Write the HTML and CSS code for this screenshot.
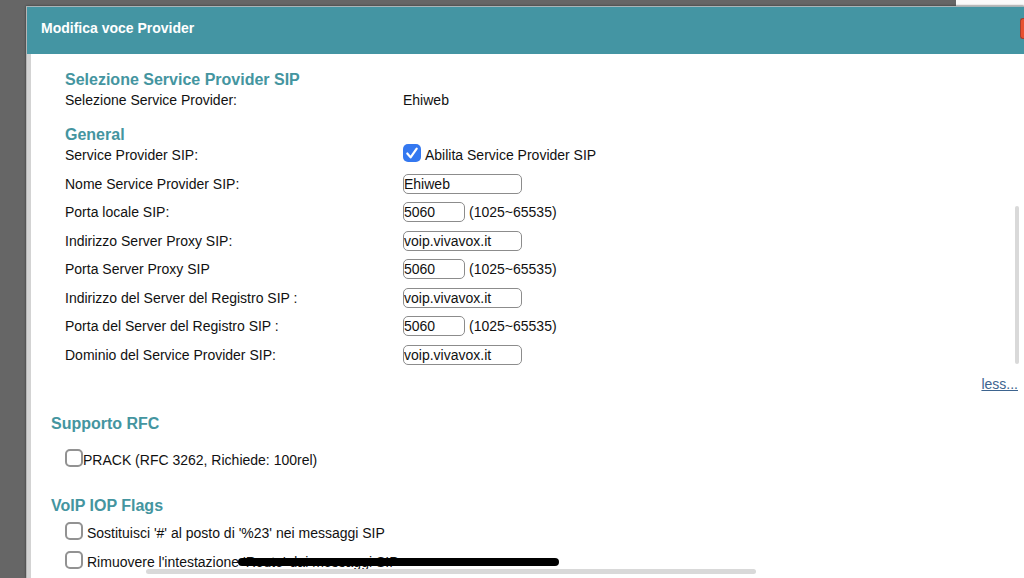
FILE: index.html
```html
<!DOCTYPE html>
<html lang="it">
<head>
<meta charset="utf-8">
<title>Modifica voce Provider</title>
<link rel="stylesheet" href="styles.css">
</head>
<body>
<div class="page-top"></div>
<main class="dialog">
  <header class="dialog-header">
    <h1 class="dialog-title">Modifica voce Provider</h1>
    <button class="close" type="button" aria-label="Chiudi"></button>
  </header>
  <form class="content">
    <section class="group">
      <h2 class="heading">Selezione Service Provider SIP</h2>
      <div class="row row-first"><span>Selezione Service Provider:</span><span>Ehiweb</span></div>
    </section>
    <section class="group">
      <h2 class="heading">General</h2>
      <div class="row row-first row-enable"><span>Service Provider SIP:</span>
        <label class="option option-enable"><input class="check" type="checkbox" checked>Abilita Service Provider SIP</label></div>
      <div class="row row-text"><label for="name">Nome Service Provider SIP:</label><div class="field"><input class="box" id="name" type="text" value="Ehiweb"></div></div>
      <div class="row"><label for="port">Porta locale SIP:</label><div class="field"><input class="box box-port" id="port" type="text" value="5060"><span>(1025~65535)</span></div></div>
      <div class="row row-text"><label for="proxy">Indirizzo Server Proxy SIP:</label><div class="field"><input class="box" id="proxy" type="text" value="voip.vivavox.it"></div></div>
      <div class="row"><label for="proxy-port">Porta Server Proxy SIP</label><div class="field"><input class="box box-port" id="proxy-port" type="text" value="5060"><span>(1025~65535)</span></div></div>
      <div class="row row-text"><label for="reg">Indirizzo del Server del Registro SIP :</label><div class="field"><input class="box" id="reg" type="text" value="voip.vivavox.it"></div></div>
      <div class="row"><label for="reg-port">Porta del Server del Registro SIP :</label><div class="field"><input class="box box-port" id="reg-port" type="text" value="5060"><span>(1025~65535)</span></div></div>
      <div class="row row-text"><label for="domain">Dominio del Service Provider SIP:</label><div class="field"><input class="box" id="domain" type="text" value="voip.vivavox.it"></div></div>
    </section>
    <div class="more"><a class="link" href="#">less...</a></div>
    <section class="flags flags-rfc">
      <h2 class="heading">Supporto RFC</h2>
      <label class="option option-tight"><input class="check" type="checkbox">PRACK (RFC 3262, Richiede: 100rel)</label>
    </section>
    <section class="flags flags-iop">
      <h2 class="heading">VoIP IOP Flags</h2>
      <label class="option"><input class="check" type="checkbox">Sostituisci '#' al posto di '%23' nei messaggi SIP</label>
      <label class="option"><input class="check" type="checkbox"><span>Rimuovere l'intestazione <span class="struck">'Route' dai messaggi SIP</span></span></label>
    </section>
  </form>
  <div class="scroll-v"></div>
  <div class="scroll-h"></div>
</main>
</body>
</html>
```
FILE: styles.css
```css
* {
  box-sizing: border-box;
}

body {
  margin: 0;
  height: 100vh;
  overflow: hidden;
  display: flex;
  flex-direction: column;
  background: #666;
  color: #111;
  font: 14px/20px "Liberation Sans", Arial, sans-serif;
}

.page-top {
  flex: none;
  align-self: flex-end;
  width: 68px;
  height: 6px;
  background: #fafafa;
}

.dialog {
  position: relative;
  flex: 1;
  min-height: 0;
  overflow: hidden;
  margin-left: 26px;
  border-top: 1px solid #a9b5b8;
  border-left: 1px solid #b5b5b5;
  background: #fff;
  box-shadow: 0 0 2px #333;
}

.dialog-header {
  display: flex;
  justify-content: space-between;
  height: 47px;
  padding: 11px 0 0 14px;
  background: #4495a3;
  color: #fff;
}

.dialog-title {
  margin: 0;
  font-size: 14px;
  line-height: 20px;
}

.close {
  width: 4px;
  height: 21px;
  padding: 0;
  border: 1px solid #a04030;
  border-right: 0;
  border-radius: 3px 0 0 3px;
  background: #e8502f;
}

.content {
  min-height: 100%;
  padding: 15px 6px 0 20px;
  border-left: 4px solid #d3d3d3;
}

.group {
  padding-left: 14px;
}

.group + .group {
  margin-top: 14px;
}

.heading {
  margin: 0;
  color: #4495a0;
  font-size: 16px;
  line-height: 21px;
}

.row {
  display: grid;
  grid-template-columns: 338px 1fr;
  align-items: center;
  min-height: 28px;
}

.row-text {
  min-height: 29px;
}

.row-first {
  min-height: 20px;
}

.row-enable {
  margin-bottom: 4px;
}

.field {
  display: flex;
  align-items: center;
  gap: 4px;
}

.box {
  width: 119px;
  height: 20px;
  padding: 0;
  border: 1px solid #8c8c8c;
  border-radius: 5px;
  background: #fff;
  color: #111;
  font: inherit;
}

.box-port {
  width: 62px;
}

.option {
  display: flex;
  align-items: center;
  gap: 4px;
  height: 20px;
}

.option-tight {
  gap: 0;
}

.check {
  appearance: none;
  flex: none;
  width: 18px;
  height: 18px;
  margin: 0 0 4px;
  border: 2px solid #929292;
  border-radius: 5px;
  background: #fff;
}

.check:checked {
  border: 0;
  background: #3478f0 url("data:image/svg+xml,%3Csvg xmlns='http://www.w3.org/2000/svg' viewBox='0 0 18 18'%3E%3Cpath d='M4.3 9.5 7.6 13.4 13.7 4.6' fill='none' stroke='white' stroke-width='2.2' stroke-linecap='round' stroke-linejoin='round'/%3E%3C/svg%3E") center / 18px;
}

.more {
  display: flex;
  justify-content: flex-end;
  align-items: center;
  height: 29px;
}

.link {
  color: #3d648f;
}

.flags .option {
  margin-left: 14px;
}

.flags-rfc {
  margin-top: 15px;
}

.flags-rfc .option {
  margin-top: 16px;
}

.flags-iop {
  margin-top: 25px;
}

.flags-iop .option {
  margin-top: 7px;
}

.flags-iop .option + .option {
  margin-top: 9px;
}

.struck {
  position: relative;
}

.struck::after {
  content: "";
  position: absolute;
  top: 4px;
  left: -5px;
  width: 321px;
  height: 8px;
  border-radius: 4px;
  background: #000;
}

.scroll-v,
.scroll-h {
  position: absolute;
  border-radius: 3px;
  background: #d9d9d9;
}

.scroll-v {
  top: 199px;
  right: 5px;
  width: 4px;
  height: 158px;
}

.scroll-h {
  bottom: 4px;
  left: 119px;
  width: 610px;
  height: 5px;
}
```
